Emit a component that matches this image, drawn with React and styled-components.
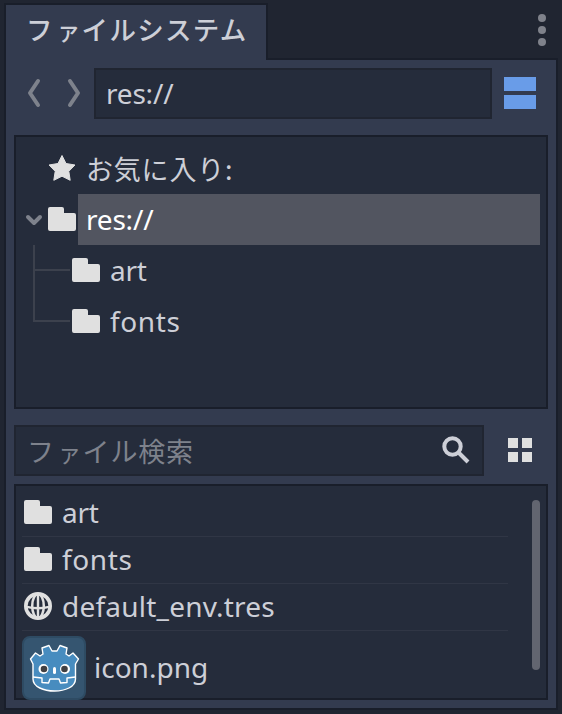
import React from "react";
import styled, { createGlobalStyle } from "styled-components";

const GlobalStyle = createGlobalStyle`
  * { box-sizing: border-box; }
  body {
    margin: 0;
    background: #202531;
    font-family: "Noto Sans", "Noto Sans CJK JP", sans-serif;
    font-size: 28px;
    line-height: 38px;
    color: #cdcfd7;
    overflow: hidden;
  }
  svg { display: block; flex: none; }
`;

const Dock = styled.div`
  width: 562px;
  height: 714px;
  padding: 3px 4px 4px;
  display: flex;
  flex-direction: column;
  background: #202531;
`;

const TabBar = styled.header`
  height: 57px;
  display: flex;
  justify-content: space-between;
  flex: none;
`;

const Tab = styled.div`
  width: 264px;
  height: 57px;
  padding: 5px 0 0 20px;
  background: #333b4f;
  border: 2px solid #191e2a;
  border-bottom: 0;
  font-family: "Noto Sans CJK JP", sans-serif;
  font-size: 26.5px;
  font-weight: 500;
  letter-spacing: 1.3px;
  white-space: nowrap;
`;

const SmallKana = styled.span`
  display: inline-block;
  width: 27.8px;
  padding-left: 3px;
  font-size: 23.5px;
  letter-spacing: 0;
  line-height: 1;
`;

const TabSpace = styled.div`
  flex: 1;
  display: flex;
  justify-content: flex-end;
  padding: 11px 12px 0 0;
  border-bottom: 2px solid #191e2a;
`;

const Panel = styled.main`
  width: 554px;
  height: 650px;
  padding: 8px;
  background: #333b4f;
  border: 2px solid #191e2a;
  border-top: 0;
  flex: none;
`;

const Toolbar = styled.div`
  height: 51px;
  padding-bottom: 1px;
  display: flex;
  align-items: center;
`;

const History = styled.div`
  width: 80px;
  display: flex;
  gap: 20px;
  padding-left: 12px;
`;

const Field = styled.div`
  width: ${(p) => p.$width}px;
  height: 51px;
  padding: 0 12px 2px 10px;
  display: flex;
  align-items: center;
  justify-content: space-between;
  align-self: flex-start;
  background: #252c3b;
  border: 2px solid #202531;
`;

const Label = styled.span`
  letter-spacing: ${(p) => p.$track || 0}px;
`;

const Placeholder = styled.span`
  color: #7e828c;
  font-family: "Noto Sans CJK JP", sans-serif;
  font-size: 27px;
  letter-spacing: 0.8px;
  padding: 2px 0 0 1px;
`;

const ToolIcon = styled.div`
  margin-left: ${(p) => p.$gap}px;
`;

const Tree = styled.section`
  height: 274px;
  margin: 16px 0;
  padding: 6px;
  background: #252c3b;
  border: 2px solid #191e2a;
`;

const TreeRow = styled.div`
  height: 51px;
  display: flex;
  align-items: flex-start;
`;

const TreeIcon = styled.div`
  width: 28px;
  height: 50px;
  display: flex;
  align-items: center;
`;

const Gutter = styled.div`
  width: ${(p) => p.$width}px;
  height: 51px;
  flex: none;
`;

const TreeLabel = styled.div`
  flex: 1;
  height: 51px;
  margin-left: 2px;
  padding: 0 0 2px 8px;
  display: flex;
  align-items: center;
  color: ${(p) => (p.$selected ? "#fff" : "#cdcfd7")};
  background: ${(p) => (p.$selected ? "#525560" : "transparent")};
`;

const Japanese = styled.span`
  padding-top: 2px;
  font-family: "Noto Sans CJK JP", sans-serif;
  font-size: 27px;
  letter-spacing: 0.8px;
`;

const FileList = styled.section`
  height: 216px;
  margin-top: 8px;
  padding: 4px 6px 0;
  display: flex;
  justify-content: space-between;
  background: #252c3b;
  border: 2px solid #191e2a;
`;

const Files = styled.div`
  width: 486px;
`;

const FileRow = styled.div`
  height: 47px;
  padding: 0 0 2px 2px;
  display: flex;
  align-items: center;
  gap: 10px;
  border-bottom: 1px solid #303645;
`;

const ImageRow = styled.div`
  height: 64px;
  margin-top: 5px;
  display: flex;
  align-items: center;
  gap: 8px;
`;

const ImageLabel = styled.span`
  padding-bottom: 2px;
`;

const ScrollThumb = styled.div`
  width: 8px;
  height: 170px;
  margin-top: 10px;
  border-radius: 4px;
  background: #626570;
`;

const Folder = () => (
  <svg width="28" height="24" viewBox="0 0 28 24">
    <path fill="#e0e0e0" d="M2 0H14Q16 0 16 2V6H26Q28 6 28 8V22Q28 24 26 24H2Q0 24 0 22V2Q0 0 2 0Z" />
  </svg>
);

const Chevron = ({ d }) => (
  <svg width="20" height="32" viewBox="0 0 20 32">
    <path d={d} fill="none" stroke="#7e828c" strokeWidth="4" strokeLinecap="round" strokeLinejoin="round" />
  </svg>
);

const Dots = () => (
  <svg width="8" height="34" viewBox="0 0 8 34" fill="#7f828b">
    <circle cx="4" cy="4" r="4" />
    <circle cx="4" cy="16" r="4" />
    <circle cx="4" cy="28" r="4" />
  </svg>
);

const Star = () => (
  <svg width="28" height="28" viewBox="0 0 28 28">
    <path fill="#e0e0e0" stroke="#e0e0e0" strokeLinejoin="round" d="M14 1.500 18 9.500 27 11 20.800 17.300 22.200 26.300 14 22.200 5.800 26.300 7.200 17.300 1 11 10 9.500Z" />
  </svg>
);

const Branch = ({ last }) => (
  <svg width="50" height="51" viewBox="0 0 50 51" fill="#3c414d">
    <path d={last ? "M11 0h2v24h35v2H11Z" : "M11 0h2v24h35v2H13v25h-2Z"} />
  </svg>
);

const Globe = () => (
  <svg width="28" height="28" viewBox="0 0 28 28" fill="none" stroke="#e0e0e0">
    <circle cx="14" cy="14" r="12.200" strokeWidth="3.600" />
    <ellipse cx="14" cy="14" rx="5.800" ry="12" strokeWidth="2.500" />
    <path d="M14 2V26M2 14.600Q14 18 26 14.600" strokeWidth="2.400" />
  </svg>
);

const GodotIcon = () => (
  <svg width="64" height="64" viewBox="0 0 64 64">
    <rect x="1" y="1" width="62" height="62" rx="7" fill="#355570" stroke="#2e4b63" strokeWidth="2" />
    <g strokeLinejoin="round" stroke="#fff" strokeWidth="1.400">
      <path fill="#478cbf" d="M20 12 27 9.500 30 15h5L38 9.500 45 12 44 18 47 20 51 17 56.500 23 53.500 28V43C53.500 51 43 55 32.500 55S11 51 11 43V28L8.500 23 13.500 17 18 20 21 18Z" />
      <path fill="none" d="M11 41 20 42V46.500L26.500 47 28 43H37L38.500 47 45 46.500V42L53.500 41" />
    </g>
    <g fill="#fff">
      <circle cx="21.500" cy="33" r="5" />
      <circle cx="43" cy="33" r="5" />
      <rect x="31" y="31" width="3" height="7" rx="1.500" />
    </g>
    <g fill="#414042">
      <circle cx="22" cy="33" r="3.300" />
      <circle cx="42.500" cy="33" r="3.300" />
    </g>
  </svg>
);

export default function App() {
  return (
    <>
      <GlobalStyle />
      <Dock>
        <TabBar>
          <Tab>フ<SmallKana>ァ</SmallKana>イルシステム</Tab>
          <TabSpace><Dots /></TabSpace>
        </TabBar>
        <Panel>
          <Toolbar>
            <History>
              <Chevron d="M12 4 4 16 12 28" />
              <Chevron d="M4 4 12 16 4 28" />
            </History>
            <Field $width={398}><Label $track={-0.2}>res://</Label></Field>
            <ToolIcon $gap={12}>
              <svg width="32" height="32" viewBox="0 0 32 32" fill="#699ce8">
                <path d="M0 0H32V14H0ZM0 18H32V32H0Z" />
              </svg>
            </ToolIcon>
          </Toolbar>
          <Tree>
            <TreeRow>
              <Gutter $width={26} />
              <TreeIcon><Star /></TreeIcon>
              <TreeLabel><Japanese>お気に入り:</Japanese></TreeLabel>
            </TreeRow>
            <TreeRow>
              <Gutter $width={26}>
                <svg width="26" height="51" viewBox="0 0 26 51">
                  <path d="M6 23 12 29 18 23" fill="none" stroke="#7e828c" strokeWidth="4" strokeLinecap="round" strokeLinejoin="round" />
                </svg>
              </Gutter>
              <TreeIcon><Folder /></TreeIcon>
              <TreeLabel $selected><Label $track={-0.2}>res://</Label></TreeLabel>
            </TreeRow>
            <TreeRow>
              <Gutter $width={50}><Branch /></Gutter>
              <TreeIcon><Folder /></TreeIcon>
              <TreeLabel><Label $track={-0.3}>art</Label></TreeLabel>
            </TreeRow>
            <TreeRow>
              <Gutter $width={50}><Branch last /></Gutter>
              <TreeIcon><Folder /></TreeIcon>
              <TreeLabel><Label $track={0.6}>fonts</Label></TreeLabel>
            </TreeRow>
          </Tree>
          <Toolbar>
            <Field $width={470}>
              <Placeholder>フ<SmallKana>ァ</SmallKana>イル検索</Placeholder>
              <svg width="28" height="28" viewBox="0 0 28 28" fill="none" stroke="#cdcfd7" strokeWidth="4">
                <circle cx="10.500" cy="10.500" r="8.200" />
                <path d="M16.500 16.500 26 26" />
              </svg>
            </Field>
            <ToolIcon $gap={24}>
              <svg width="24" height="24" viewBox="0 0 24 24" fill="#e0e0e0">
                <path d="M0 0H10V10H0ZM14 0H24V10H14ZM0 14H10V24H0ZM14 14H24V24H14Z" />
              </svg>
            </ToolIcon>
          </Toolbar>
          <FileList>
            <Files>
              <FileRow><Folder /><Label $track={-0.3}>art</Label></FileRow>
              <FileRow><Folder /><Label $track={0.6}>fonts</Label></FileRow>
              <FileRow><Globe /><Label $track={0.22}>default_env.tres</Label></FileRow>
              <ImageRow><GodotIcon /><ImageLabel>icon.png</ImageLabel></ImageRow>
            </Files>
            <ScrollThumb />
          </FileList>
        </Panel>
      </Dock>
    </>
  );
}
